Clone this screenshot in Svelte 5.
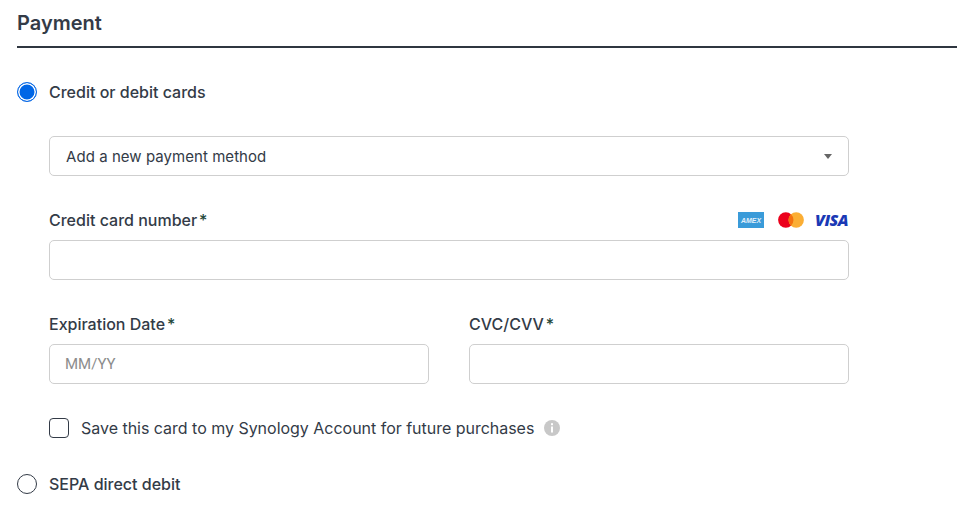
<script>
	let method = $state('card')
	let saveCard = $state(false)
</script>

<main class="payment">
	<h2>Payment</h2>

	<label class="option first">
		<input type="radio" name="method" value="card" bind:group={method} />
		<span>Credit or debit cards</span>
	</label>

	<form class="card-form">
		<div class="select">
			<span>Add a new payment method</span>
			<i class="caret"></i>
		</div>

		<div class="field number">
			<div class="label-row">
				<label for="number">Credit card number<b>*</b></label>
				<div class="brands">
					<svg width="26" height="16" viewBox="0 0 26 16">
						<rect width="26" height="16" fill="#3a9bd9" />
						<text x="3" y="10.8" textLength="20" lengthAdjust="spacingAndGlyphs" class="amex">AMEX</text>
					</svg>
					<svg width="26" height="16" viewBox="0 0 26 16">
						<circle cx="7.8" cy="8" r="7.7" fill="#eb001b" />
						<circle cx="18.2" cy="8" r="7.7" fill="#fbae34" />
						<path d="M13 2.35a7.7 7.7 0 0 1 0 11.3a7.7 7.7 0 0 1 0-11.3z" fill="#f4700f" />
					</svg>
					<span class="visa">VISA</span>
				</div>
			</div>
			<input id="number" type="text" />
		</div>

		<div class="pair">
			<div class="field">
				<div class="label-row">
					<label for="expiry">Expiration Date<b>*</b></label>
				</div>
				<input id="expiry" type="text" placeholder="MM/YY" />
			</div>
			<div class="field">
				<div class="label-row">
					<label for="cvc">CVC/CVV<b>*</b></label>
				</div>
				<input id="cvc" type="text" />
			</div>
		</div>

		<label class="save">
			<input type="checkbox" bind:checked={saveCard} />
			<span>Save this card to my Synology Account for future purchases</span>
			<svg width="16" height="16" viewBox="0 0 16 16">
				<circle cx="8" cy="8" r="8" fill="#c8c8c8" />
				<rect x="7" y="3.2" width="2" height="2" fill="#fff" />
				<rect x="7" y="6.5" width="2" height="6" fill="#fff" />
			</svg>
		</label>
	</form>

	<label class="option">
		<input type="radio" name="method" value="sepa" bind:group={method} />
		<span>SEPA direct debit</span>
	</label>
</main>

<style>
	:global(body) {
		background: #fff;
	}

	.payment {
		padding: 0 15px 0 17px;
		font-family: Inter, sans-serif;
		font-size: 16px;
		color: #333b47;
	}

	h2 {
		margin: 0;
		height: 48px;
		box-sizing: border-box;
		padding-top: 11px;
		font-size: 20px;
		line-height: 24px;
		font-weight: 600;
		border-bottom: 2px solid #2f3640;
	}

	.option {
		display: flex;
		align-items: center;
		gap: 12px;
		height: 20px;
		font-weight: 500;
	}

	.first {
		margin-top: 34px;
	}

	.option input {
		appearance: none;
		width: 20px;
		height: 20px;
		margin: 0;
		border: 1px solid #333b47;
		border-radius: 50%;
		background: #fff;
	}

	.option input:checked {
		border-color: #0a6ae6;
		background: #0066e6;
		box-shadow: inset 0 0 0 1.5px #fff;
	}

	.card-form {
		width: 800px;
		margin: 34px 0 36px 32px;
	}

	.select {
		height: 40px;
		box-sizing: border-box;
		padding: 0 16px;
		display: flex;
		align-items: center;
		justify-content: space-between;
		border: 1px solid #cfcfcf;
		border-radius: 5px;
		font-size: 15px;
		letter-spacing: 0.05px;
	}

	.caret {
		width: 0;
		height: 0;
		border: 4px solid transparent;
		border-top: 5px solid #666;
		border-bottom: 0;
	}

	.field {
		flex: 1;
		min-width: 0;
	}

	.number {
		margin-top: 32px;
	}

	.label-row {
		height: 32px;
		padding-bottom: 8px;
		box-sizing: border-box;
		display: flex;
		align-items: center;
		justify-content: space-between;
	}

	.label-row label {
		font-weight: 500;
	}

	.label-row b {
		margin-left: 2px;
		font-weight: 500;
		color: #24483a;
	}

	.brands {
		display: flex;
		align-items: center;
		gap: 14px;
	}

	.brands svg + svg {
		margin-right: -3px;
	}

	.amex {
		font-family: "Liberation Sans", sans-serif;
		font-size: 8px;
		font-style: italic;
		font-weight: 700;
		fill: #e4f1fb;
	}

	.visa {
		width: 34px;
		font-family: "Open Sans", sans-serif;
		font-size: 16px;
		line-height: 16px;
		font-style: italic;
		font-weight: 800;
		letter-spacing: -0.5px;
		color: #1a39b5;
	}

	.field input {
		display: block;
		width: 100%;
		height: 40px;
		box-sizing: border-box;
		padding: 0 15px;
		border: 1px solid #cfcfcf;
		border-radius: 5px;
		font-family: Roboto, sans-serif;
		font-size: 15px;
		outline: none;
	}

	.field input::placeholder {
		color: #8c8c8c;
	}

	.pair {
		display: flex;
		gap: 40px;
		margin-top: 32px;
	}

	.save {
		display: flex;
		align-items: center;
		margin-top: 34px;
		height: 20px;
		letter-spacing: -0.02px;
	}

	.save input {
		appearance: none;
		width: 20px;
		height: 20px;
		margin: 0 12px 0 0;
		border: 1px solid #333b47;
		border-radius: 4px;
		background: #fff;
	}

	.save svg {
		margin-left: 10px;
	}
</style>
